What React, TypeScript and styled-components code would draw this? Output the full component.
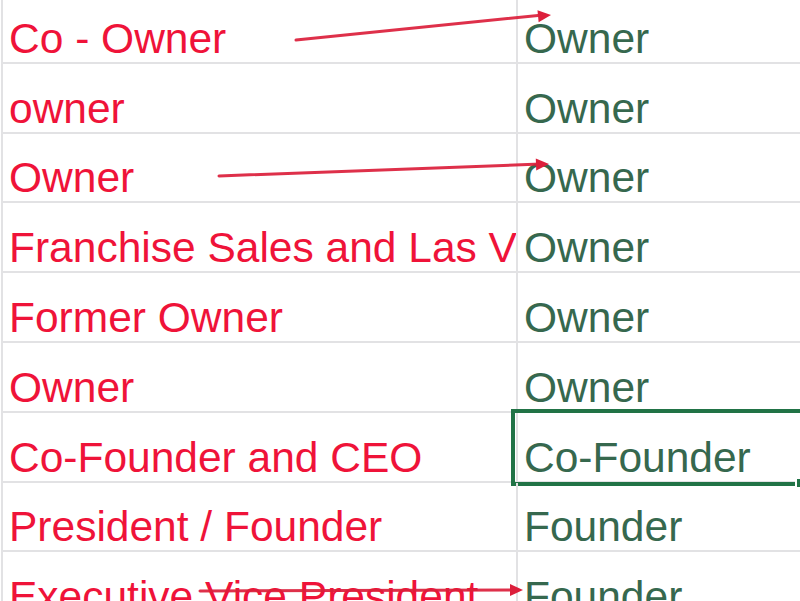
import React from 'react';
import styled, { createGlobalStyle } from 'styled-components';

const Global = createGlobalStyle({
  "html, body": {
    margin: 0,
    padding: 0,
    background: "#ffffff",
    overflow: "hidden",
  },
  body: {
    width: "800px",
    height: "601px",
  },
});

const Page = styled.div({
  position: "relative",
  width: "800px",
  height: "601px",
  overflow: "hidden",
  background: "#ffffff",
});

const Sheet = styled.div({
  marginTop: "-6px",
  marginLeft: "1px",
  borderLeft: "2px solid #e2e2e4",
  display: "flex",
  flexDirection: "column",
});

const Row = styled.div({
  display: "grid",
  gridTemplateColumns: "515px 1fr",
  height: "69.8px",
});

const Cell = styled.div<{ $tone: "red" | "green" }>(({ $tone }) => ({
  position: "relative",
  boxSizing: "border-box",
  display: "flex",
  alignItems: "flex-end",
  overflow: $tone === "red" ? "hidden" : "visible",
  whiteSpace: "nowrap",
  borderBottom: "2px solid #e2e2e4",
  borderRight: $tone === "red" ? "2px solid #e2e2e4" : "none",
  paddingLeft: "6px",
  paddingBottom: "2px",
  fontFamily: "'Liberation Sans', Arial, sans-serif",
  fontSize: "42.5px",
  lineHeight: "43px",
  color: $tone === "red" ? "#ef1339" : "#36684e",
}));

const Selection = styled.div({
  position: "absolute",
  left: "-7px",
  top: "-4px",
  bottom: "-5px",
  right: "-40px",
  border: "4px solid #217346",
  pointerEvents: "none",
});

const FillHandle = styled.div({
  position: "absolute",
  left: "280px",
  bottom: "-7px",
  width: "8px",
  height: "8px",
  background: "#217346",
  border: "2px solid #ffffff",
});

const Arrows = styled.svg({
  position: "absolute",
  left: 0,
  top: 0,
  width: "800px",
  height: "601px",
  pointerEvents: "none",
});

type Entry = { title: string; mapped: string; selected?: boolean };

const rows: Entry[] = [
  { title: "Co - Owner", mapped: "Owner" },
  { title: "owner", mapped: "Owner" },
  { title: "Owner", mapped: "Owner" },
  { title: "Franchise Sales and Las Vegas Owner", mapped: "Owner" },
  { title: "Former Owner", mapped: "Owner" },
  { title: "Owner", mapped: "Owner" },
  { title: "Co-Founder and CEO", mapped: "Co-Founder", selected: true },
  { title: "President / Founder", mapped: "Founder" },
  { title: "Executive Vice President", mapped: "Founder" },
];

const arrows = [
  { x1: 296, y1: 40, x2: 551, y2: 15 },
  { x1: 219, y1: 176, x2: 549, y2: 164 },
  { x1: 200, y1: 591, x2: 523, y2: 590 },
];

function ArrowHead({ x1, y1, x2, y2 }: { x1: number; y1: number; x2: number; y2: number }) {
  const angle = (Math.atan2(y2 - y1, x2 - x1) * 180) / Math.PI;
  return (
    <g transform={`translate(${x2} ${y2}) rotate(${angle})`}>
      <polygon points="0,0 -13,-6 -13,6" fill="#dc1f3b" />
    </g>
  );
}

function App() {
  return (
    <Page>
      <Global />
      <Sheet>
        {rows.map((r, i) => (
          <Row key={i}>
            <Cell $tone="red">{r.title}</Cell>
            <Cell $tone="green">
              {r.mapped}
              {r.selected && (
                <Selection>
                  <FillHandle />
                </Selection>
              )}
            </Cell>
          </Row>
        ))}
      </Sheet>
      <Arrows viewBox="0 0 800 601">
        {arrows.map((a, i) => (
          <g key={i}>
            <line
              x1={a.x1}
              y1={a.y1}
              x2={a.x2 - 8}
              y2={a.y2}
              stroke="#dc1f3b"
              strokeWidth={3}
              strokeLinecap="round"
              opacity={0.92}
            />
            <ArrowHead {...a} />
          </g>
        ))}
      </Arrows>
    </Page>
  );
}

export default App;
